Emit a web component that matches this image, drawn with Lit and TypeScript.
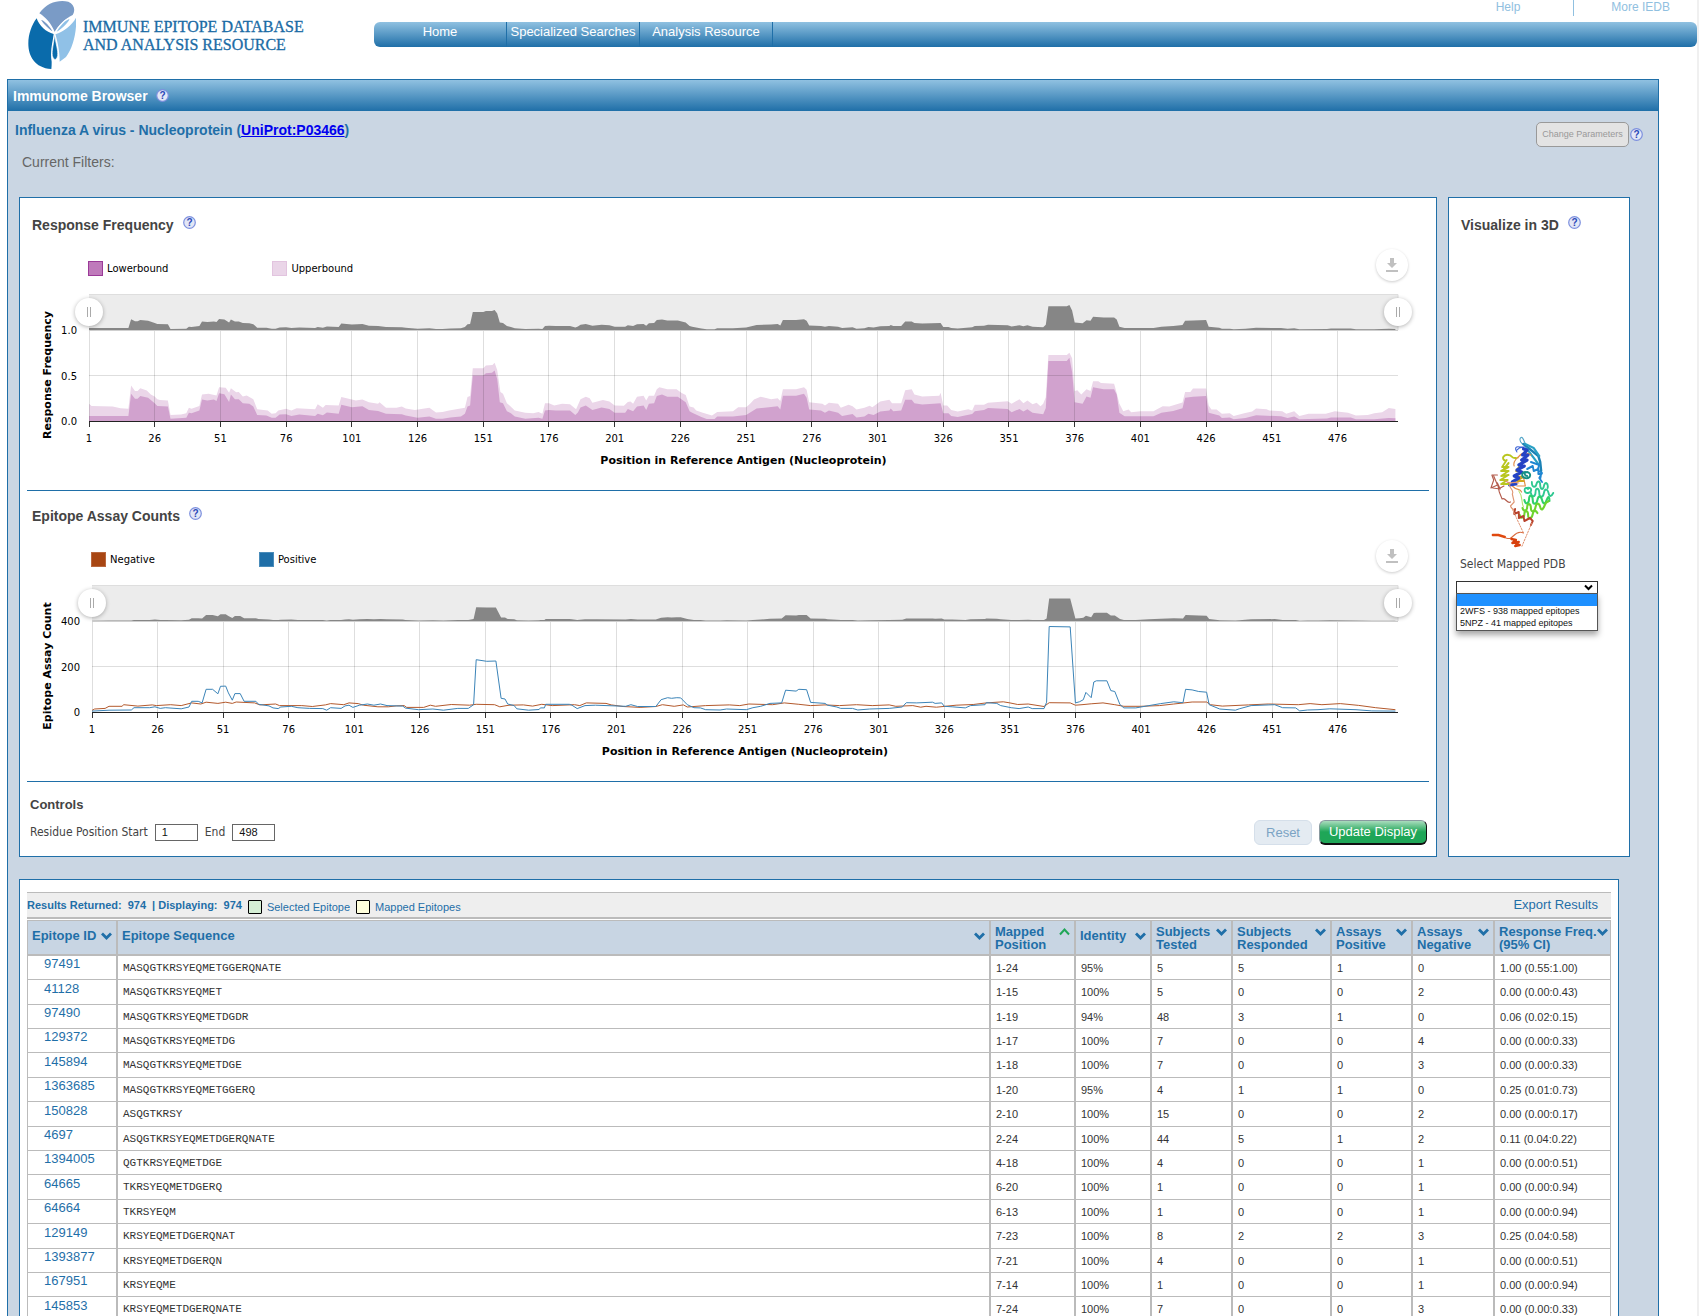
import { LitElement, html, svg, css } from "lit";
import { customElement, property, state } from "lit/decorators.js";

type Pt = [number, number];

const parse = (s: string): Pt[] =>
  s.trim().split(/\s+/).map((p) => p.split(",").map(Number) as Pt);

const LOWER = parse(`1,.055 16,.055 17,.3 18.5,.245 19.5,.245 20.5,.275 23.5,.255 26,.195 27,.165 31,.16 32,.025 38,.035 39,.09 40,.085 43,.115 44,.235
46,.225 48.5,.235 49.5,.22 50.5,.305 52.5,.295 54.3,.21 55,.29 56.5,.24 58,.24 59.5,.195 62,.19 63.5,.16 65,.065 68.5,.06 70.5,.035 72,.035 73.5,.07 76,.075
78,.055 81,.07 87,.055 88,.08 90,.063 91.5,.095 96,.08 97,.178 101,.15 105,.163 107.5,.12 111,.11 114,.08 120,.075 121.5,.06 126,.035 130.5,.05 133,.025
135.5,.025 138.5,.04 142.5,.05 144,.08 145,.16 146,.17 147,.5 151,.5 152,.525 154.3,.53 155.3,.555 156.3,.46 157.3,.207 158.5,.195 160,.107 161.5,.085
163,.05 167,.025 172,.035 173.5,.025 174.5,.115 176,.12 178.5,.115 184,.115 186,.067 187,.095 188,.148 190,.17 192.5,.12 196,.148 199,.133 201,.09 205,.09
206,.133 208,.107 209.5,.16 212,.17 213,.12 214,.19 216,.196 217,.274 219,.29 221,.267 225,.267 228,.207 229.5,.107 230.5,.09 234,.044 236,.022 239,.022
240,.05 246,.05 251,.067 255,.137 260.5,.155 263,.163 264,.126 265,.278 270,.278 273,.3 274,.255 275,.126 279.5,.115 281,.09 282.5,.115 286,.09 287.5,.055
291.5,.078 293,.037 296,.05 297.5,.08 299.5,.067 302,.104 305.5,.115 306,.137 307,.107 310,.115 311.5,.233 314,.233 315,.196 318,.18 325,.196 326,.085
328,.085 329,.055 331.5,.044 337,.078 338,.107 341.5,.12 343,.144 350.5,.133 352,.096 355,.133 356.5,.104 358,.13 360,.09 364,.074 365,.144 366,.66 373,.66
374,.695 375,.54 376,.207 379,.19 380.5,.27 382,.255 383,.37 387,.348 391,.348 392,.29 393,.09 395,.052 406,.052 409,.09 413.5,.11 417,.14 418,.255
421,.267 426,.274 427,.09 431,.06 432,.033 435,.037 436.5,.02 441,.033 445,.063 454.5,.052 457,.033 459.5,.05 461.5,.02 472,.026 473.5,.04 481,.04
483,.02 490,.02 495.5,.033 498,.03`);

const UPPER = parse(`1,.19 2,.165 10,.16 13,.14 16,.135 17,.39 18.5,.33 19.5,.33 20.5,.36 23,.335 24.5,.29 26,.27 27,.24 28,.23 31,.225 32,.065 36,.07 38,.085
39,.145 40,.135 43,.165 44,.29 46.5,.3 49.5,.28 50.5,.37 53,.365 54.3,.31 55,.36 57,.315 58,.32 59.5,.27 61,.28 63.5,.24 65,.13 69,.115 70.5,.08 72,.085
73,.115 76,.135 78,.115 80,.14 87,.13 88,.185 90,.145 91,.175 96,.17 97,.265 101,.235 102.5,.225 105,.237 107.5,.205 111,.19 111.5,.205 114,.145 118,.145
120,.16 121.5,.137 125,.12 130.5,.145 133,.095 135.5,.1 138,.115 144,.145 145,.265 146,.275 147,.58 151,.58 152,.61 154.5,.615 155.3,.64 156.3,.56
157.5,.32 158.5,.3 160,.195 161,.17 163,.115 167,.09 170,.085 172,.1 173.5,.08 174.5,.195 176,.195 178,.17 181,.19 184,.185 186.3,.13 188,.24 190,.267
191.5,.25 192.5,.2 196.5,.23 199,.215 201,.17 204.5,.167 206,.21 207,.215 208,.19 209.5,.267 212,.278 213,.226 214,.278 216,.278 217,.35 218,.37 221,.348
224.5,.348 226.5,.307 228,.285 229.5,.16 231,.148 232,.115 234.5,.09 238,.06 240,.1 246,.107 248,.15 251,.15 252.5,.19 254,.237 256.5,.267 260.5,.24
263,.25 264,.22 265,.348 270,.348 273,.37 274,.344 275,.207 280,.19 281,.17 282.5,.2 286,.19 287,.145 290,.178 291.5,.163 293,.126 296,.145 298,.167
299,.15 302,.215 305.5,.233 306.5,.196 310,.196 311.5,.337 314,.348 315,.29 318,.27 324.5,.278 325,.31 326,.17 327.5,.17 329,.12 331.5,.104 335.5,.13
337,.115 338,.178 341.5,.178 343,.2 350.5,.218 352,.19 355,.24 356.5,.196 358,.226 360,.185 361.5,.2 363,.163 364,.19 365,.26 366,.725 373,.725 374,.75
375,.69 376,.33 377,.337 378.5,.29 380.5,.348 382,.33 383,.437 385,.437 386,.418 391,.41 392,.307 393,.19 394.5,.107 396.5,.126 397.5,.096 401,.107
406,.107 407.5,.133 409.5,.163 412,.16 417,.204 418,.318 420,.318 421,.356 426,.356 427,.17 428,.126 430,.126 432,.08 435,.085 436.5,.055 440.5,.085
443.5,.104 445,.137 449,.13 450,.115 455,.107 456.5,.08 459.5,.107 461.5,.055 465,.08 471.5,.08 475,.107 480,.09 483,.06 487.5,.067 490,.085 493,.096
495.5,.144 498,.133`);

const POSITIVE = parse(`1,4 7.5,8 16,9 17,19 23,19 25,23 27,16 29,19 35,14 38,22 39,47 41.5,47 43,40 44.5,100 47,100 49,80 50,113 52,114 53,84 54.5,52 55.5,81
57.5,81 59,47 63.5,47 64.5,34 68.5,27 70,18 72,15 73,22 77,25 79.5,19 84,16 89,15 90.5,8 92,19 96,16 97.5,27 99,30 100.5,20 103,30 106,35 108.5,30 111,35
113.5,28 119.5,26 120.5,17 125.5,10 131,13 135,8 140.5,16 144.5,16 146.5,32 147.5,230 151.5,223 155,224 157,60 158.5,57 159.5,35 162,28 163,14 167.5,8
171.5,11 172,18 173.5,18 174,34 183,34 184,30 186,15 189,28 193,30 204.5,25 206.5,32 209,24 216,24 218,54 220.5,63 222,60 224,63 225.5,62 228,32
230.5,19 233,18 235,10 240.5,9 243,13 250.5,10 253,19 256,25 259.5,38 264,40 265.5,96 269.5,92 270.5,100 273.5,98 275,42 280.5,38 281.5,30 285,22
286.5,16 291,16 293,9 297.5,13 305,16 310,22 311.5,41 315.5,40 321.5,43 322.5,38 325,40 326,25 329,23 334,18 336,28 341.5,32 342,41 346,38 347.5,28
351.5,19 354.5,15 358,22 359.5,15 364,15 365,43 366,376 374,374 376,40 377.5,45 379,54 380,86 382,63 383,132 384,137 388,137 389.5,94 391,90 393,32
394.5,18 399,18 404,28 408.5,37 413.5,45 417,41 418,100 420.5,97 423,90 426,87 427,32 431,13 437,8 438.5,14 443,28 452,32 455,19 460,18 461.5,5 464.5,9
468.5,10 473,14 483,10 489,5 498,4`);

const NEGATIVE = parse(`1,7 2,13 6,16 7.5,25 12.5,25 13,32 18.5,26 24,31 25.5,28 31,32 35,28 39,40 42.5,35 44.5,43 49,38 52,43 54.5,38 56,44 63,40 65,31 71,35
72.5,28 81,28 85,24 90,31 92,37 97,32 99,40 102.5,37 104.5,30 110,23 114,23 117,27 120,28 121,20 127.5,20 130,30 132,25 138,33 145,30 147.5,34 154.5,32
156.5,23 160,30 165.5,31 169,26 172.5,34 176.5,28 185,32 187,28 189.5,40 197,38 199,31 203.5,24 210,20 216,24 218.5,32 223,25 226.5,31 228,22 235,28
244,31 248,28 251.5,35 260.5,32 265,40 270.5,34 275,28 280.5,31 286,28 292.5,32 298.5,28 305,31 307.5,25 314,28 317,21 319,25 323,21 330.5,30 337,33
342,40 348.5,45 351,40 354,33 358,35 364,24 366,41 374,40 376,30 378.5,32 382,36 386.5,40 391,32 394.5,25 401,25 408,28 413.5,35 420.5,44 426,44
427.5,32 432,26 442,31 449.5,35 461,32 465.5,37 470,32 477,37 484,29 490.5,19 498,10`);

interface Series {
  name: string;
  fill: string;
  border: string;
  stroke: string;
  area: string;
  points: Pt[];
}
interface ChartSpec {
  title: string;
  axis: string;
  left: number;
  max: number;
  ticks: string[];
  preview: Pt[];
  previewScale: number;
  series: Series[];
}

const FREQUENCY: ChartSpec = {
  title: "Response Frequency",
  axis: "Response Frequency",
  left: 62,
  max: 1,
  ticks: ["0.0", "0.5", "1.0"],
  preview: LOWER,
  previewScale: 36,
  series: [
    { name: "Lowerbound", fill: "#bf7abb", border: "#9b3a98", stroke: "none", area: "#d1a2ce", points: LOWER },
    { name: "Upperbound", fill: "#ead5e8", border: "#e2c4df", stroke: "none", area: "#ebd6e9", points: UPPER },
  ],
};

const COUNTS: ChartSpec = {
  title: "Epitope Assay Counts",
  axis: "Epitope Assay Count",
  left: 65,
  max: 400,
  ticks: ["0", "200", "400"],
  preview: POSITIVE,
  previewScale: 0.06,
  series: [
    { name: "Negative", fill: "#a84613", border: "#b9683f", stroke: "#b3592c", area: "none", points: NEGATIVE },
    { name: "Positive", fill: "#1f6fa8", border: "#4a8cba", stroke: "#3b84b8", area: "none", points: POSITIVE },
  ],
};

const helpIcon = html`<svg width="13" height="13" viewBox="0 0 13 13" aria-hidden="true">
  <circle cx="6.5" cy="6.5" r="5.8" fill="#e3e7f6" stroke="#7d90de" stroke-width="1.2" />
  <text x="6.5" y="10" text-anchor="middle" font-family="Liberation Sans, sans-serif" font-size="10" font-weight="700" fill="#2a48b8">?</text>
</svg>`;

const TOP = 46;
const BASE = 137;
const HEIGHT = 206;

@customElement("range-chart")
class RangeChart extends LitElement {
  @property({ attribute: false }) spec!: ChartSpec;
  @state() private w = 1403;
  private ro = new ResizeObserver(() => this.measure());

  static styles = css`
    :host { display: block; position: relative; font: 10px/15px "DejaVu Sans", Verdana, sans-serif; color: #000; }
    .legend { display: flex; gap: 104px; padding-top: 27px; }
    .key { display: flex; gap: 4px; }
    .swatch { width: 15px; height: 15px; box-sizing: border-box; border: 1px solid; }
    .plot { display: block; margin-top: 8px; overflow: visible; }
    .bold { font-weight: 700; font-size: 11px; }
    .download, .grip {
      position: absolute; display: grid; place-items: center; padding: 0; border: 0;
      border-radius: 50%; background: #fff; box-shadow: 0 1px 4px rgba(0, 0, 0, 0.3);
    }
    .download { width: 32px; height: 32px; right: 21px; top: 15px; box-shadow: 0 1px 3px rgba(0, 0, 0, 0.2); }
    .grip { width: 28px; height: 28px; top: 64px; }
    .grip.end { right: 17px; }
  `;

  private measure() {
    const w = Math.round(this.getBoundingClientRect().width);
    if (w > 0 && w !== this.w) this.w = w;
  }
  firstUpdated() {
    this.measure();
    this.ro.observe(this);
  }
  disconnectedCallback() {
    super.disconnectedCallback();
    this.ro.disconnect();
  }

  render() {
    const { left, max, ticks, series, preview, previewScale, axis } = this.spec;
    const right = this.w - 31;
    const x = (p: number) => left + ((p - 1) / 498) * (right - left);
    const y = (v: number) => BASE - (v / max) * (BASE - TOP);
    const line = (pts: Pt[], f: (v: number) => number) =>
      pts.map(([p, v]) => `${x(p).toFixed(1)},${f(v).toFixed(1)}`).join(" ");
    const marks = Array.from({ length: 20 }, (_, i) => 1 + i * 25);
    const middle = (left + right) / 2;
    return html`
      <div class="legend" style="padding-left:${left - 1}px">
        ${series.map((s) => html`<span class="key"><i class="swatch" style="background:${s.fill};border-color:${s.border}"></i>${s.name}</span>`)}
      </div>
      <svg class="plot" width=${this.w} height=${HEIGHT} role="img" aria-label=${axis}>
        <rect x=${left} y="10" width=${right - left} height="36" fill="#ececec" />
        <path d="M${left} 10.5H${right}V46" fill="none" stroke="#dedede" />
        <polygon fill="#868686" points="${x(1)},46 ${line(preview, (v) => 46 - v * previewScale)} ${x(498)},46" />
        <path d="M${left} 46.5H${right}" stroke="#cfcfcf" />
        ${[...series].reverse().filter((s) => s.area !== "none").map((s) => svg`<polygon fill=${s.area} points="${x(1)},${BASE} ${line(s.points, y)} ${x(498)},${BASE}" />`)}
        <path d="M${left} 91.5H${right}" stroke="#000" stroke-opacity="0.13" />
        ${marks.map((m) => svg`
          <path d="M${Math.floor(x(m)) + 0.5} 47V${BASE}" stroke="#000" stroke-opacity="0.13" />
          <path d="M${Math.floor(x(m)) + 0.5} ${BASE}v6" stroke="#333" />
          <text x=${x(m)} y="158" text-anchor="middle">${m}</text>`)}
        ${series.filter((s) => s.stroke !== "none").map((s) => svg`<polyline fill="none" stroke=${s.stroke} stroke-linejoin="round" points=${line(s.points, y)} />`)}
        <path d="M${left} ${BASE + 0.5}H${right}" stroke="#222" />
        ${ticks.map((t, i) => svg`<text x=${left - 12} y=${BASE + 4 - (i * (BASE - TOP)) / 2} text-anchor="end">${t}</text>`)}
        <text class="bold" x=${middle} y="180" text-anchor="middle">Position in Reference Antigen (Nucleoprotein)</text>
        <text class="bold" transform="translate(24 91) rotate(-90)" text-anchor="middle">${axis}</text>
      </svg>
      <button class="download" aria-label="Download chart">
        <svg width="12" height="14" viewBox="0 0 12 14"><path d="M4 0h4v5h3L6 10 1 5h3zM0 12h12v2H0z" fill="#c0c0c0" /></svg>
      </button>
      <button class="grip" aria-label="Range start" style="left:${left - 14}px">
        <svg width="4" height="10"><path d="M.5 0v10M3.5 0v10" stroke="#aaa" /></svg>
      </button>
      <button class="grip end" aria-label="Range end">
        <svg width="4" height="10"><path d="M.5 0v10M3.5 0v10" stroke="#aaa" /></svg>
      </button>
    `;
  }
}

interface Column { label: string[]; width: number | null; sort: "down" | "up" }
const COLUMNS: Column[] = [
  { label: ["Epitope ID"], width: 90, sort: "down" },
  { label: ["Epitope Sequence"], width: null, sort: "down" },
  { label: ["Mapped", "Position"], width: 85, sort: "up" },
  { label: ["Identity"], width: 76, sort: "down" },
  { label: ["Subjects", "Tested"], width: 81, sort: "down" },
  { label: ["Subjects", "Responded"], width: 99, sort: "down" },
  { label: ["Assays", "Positive"], width: 81, sort: "down" },
  { label: ["Assays", "Negative"], width: 82, sort: "down" },
  { label: ["Response Freq.", "(95% CI)"], width: 116, sort: "down" },
];

const ROWS = `97491|MASQGTKRSYEQMETGGERQNATE|1-24|95%|5|5|1|0|1.00 (0.55:1.00)
41128|MASQGTKRSYEQMET|1-15|100%|5|0|0|2|0.00 (0.00:0.43)
97490|MASQGTKRSYEQMETDGDR|1-19|94%|48|3|1|0|0.06 (0.02:0.15)
129372|MASQGTKRSYEQMETDG|1-17|100%|7|0|0|4|0.00 (0.00:0.33)
145894|MASQGTKRSYEQMETDGE|1-18|100%|7|0|0|3|0.00 (0.00:0.33)
1363685|MASQGTKRSYEQMETGGERQ|1-20|95%|4|1|1|0|0.25 (0.01:0.73)
150828|ASQGTKRSY|2-10|100%|15|0|0|2|0.00 (0.00:0.17)
4697|ASQGTKRSYEQMETDGERQNATE|2-24|100%|44|5|1|2|0.11 (0.04:0.22)
1394005|QGTKRSYEQMETDGE|4-18|100%|4|0|0|1|0.00 (0.00:0.51)
64665|TKRSYEQMETDGERQ|6-20|100%|1|0|0|1|0.00 (0.00:0.94)
64664|TKRSYEQM|6-13|100%|1|0|0|1|0.00 (0.00:0.94)
129149|KRSYEQMETDGERQNAT|7-23|100%|8|2|2|3|0.25 (0.04:0.58)
1393877|KRSYEQMETDGERQN|7-21|100%|4|0|0|1|0.00 (0.00:0.51)
167951|KRSYEQME|7-14|100%|1|0|0|1|0.00 (0.00:0.94)
145853|KRSYEQMETDGERQNATE|7-24|100%|7|0|0|3|0.00 (0.00:0.33)`
  .split("\n").map((r) => r.split("|"));

@customElement("results-table")
class ResultsTable extends LitElement {
  static styles = css`
    :host { display: block; font: 11px/14px "Liberation Sans", Arial, sans-serif; color: #333; }
    .bar {
      display: flex; align-items: center; justify-content: space-between; box-sizing: border-box; height: 27px;
      background: #eee; border-top: 1px solid #bbb; border-bottom: 2px solid #bbb; color: #1f6fa8; padding-right: 13px;
    }
    .info { display: flex; align-items: center; gap: 6px; }
    .key { display: flex; align-items: center; gap: 5px; padding-top: 3px; }
    .swatch { width: 14px; height: 14px; box-sizing: border-box; border: 1px solid #000; border-radius: 1px; }
    .selected { background: #d5efd5; }
    .mapped { background: #ffffdc; }
    a { color: #1f6fa8; text-decoration: none; }
    .export { font-size: 13px; }
    table { width: 100%; margin-top: 1px; table-layout: fixed; border-collapse: separate; border-spacing: 0; border-left: 1px solid #bbb; }
    th { background: #c8d5e3; height: 33px; padding: 0; border-top: 1px solid #bbb; border-bottom: 2px solid #bbb; border-right: 2px solid #bbb; vertical-align: top; text-align: left; }
    th:last-child, td:last-child { border-right-width: 1px; }
    .sort {
      display: flex; justify-content: space-between; width: 100%; border: 0; background: none; padding: 4px 4px 0;
      font: 700 13px/13px "Liberation Sans", Arial, sans-serif; color: #1f6fa8; text-align: left; white-space: nowrap;
    }
    .sort.single { padding-top: 8px; }
    .sort svg { flex: none; margin-top: 3px; }
    .label { display: flex; flex-direction: column; }
    td { box-sizing: border-box; height: 24px; padding: 0 5px; border-bottom: 1px solid #bbb; border-right: 2px solid #bbb; }
    tr:nth-child(5n + 2) td, tr:nth-child(5n) td { height: 25px; }
    .id { font-size: 13px; padding: 0 0 7px 16px; }
    .seq { font: 11px/14px "Liberation Mono", "Courier New", monospace; }
  `;

  render() {
    return html`
      <div class="bar">
        <div class="info">
          <b>Results Returned:</b><b>974</b><b>| Displaying:</b><b>974</b>
          <span class="key"><i class="swatch selected"></i>Selected Epitope</span>
          <span class="key"><i class="swatch mapped"></i>Mapped Epitopes</span>
        </div>
        <a class="export" href="#export">Export Results</a>
      </div>
      <table>
        <colgroup>${COLUMNS.map((c) => (c.width ? html`<col style="width:${c.width}px">` : html`<col>`))}</colgroup>
        <thead><tr>${COLUMNS.map((c) => html`<th scope="col">
          <button class="sort ${c.label.length === 1 ? "single" : ""}">
            <span class="label">${c.label.map((l) => html`<span>${l}</span>`)}</span>
            <svg width="11" height="8" viewBox="0 0 11 8" fill="none" stroke-width="2.8">
              ${c.sort === "down" ? svg`<path d="M1 1.5L5.5 6L10 1.5" stroke="#1f6fa8" />` : svg`<path d="M1 6.5L5.5 1.5L10 6.5" stroke="#1fa657" stroke-width="2" />`}
            </svg>
          </button></th>`)}</tr></thead>
        <tbody>${ROWS.map((r) => html`<tr>${r.map((v, i) =>
          i === 0 ? html`<td class="id"><a href="#epitope-${v}">${v}</a></td>` : html`<td class=${i === 1 ? "seq" : ""}>${v}</td>`)}</tr>`)}</tbody>
      </table>
    `;
  }
}

const protein = html`<svg class="protein" width="66" height="112" viewBox="0 0 71 112" preserveAspectRatio="none" fill="none" stroke-linecap="round" stroke-linejoin="round" role="img" aria-label="Protein structure">
  <path d="M35 8c-5-4-2-8 0-6 2 2 2 5 4 8" stroke="#55a6c8" stroke-width="1.2" />
  <path d="M36 8l16 12 2 6 1 9" stroke="#1c82b5" stroke-width="2.6" />
  <path d="M39 12l13 16M38 8l9 4 6 8" stroke="#29a0c4" stroke-width="2.2" />
  <path d="M29 14c4-4 8-3 8 0M29 16c-3-4-1-6 3-5h6" stroke="#3d63d6" stroke-width="1.1" />
  <path d="M30 22c3-6 10-6 14-3M24 50c5 5 8 2 10 6M29 50l9 0-2-9M26 30c-2-5 4-9 7-11" stroke="#e28b46" stroke-width="1.2" />
  <path d="M31 31l-3 4 7 1-7 4 8 1-7 4 7 0" stroke="#d3a51c" stroke-width="1.8" />
  <path d="M36 13l4 1-5 5 6 0-7 5 6 0-9 5 6 1-8 4 5 2-8 4 5 2-7 4 4 2-7 1" stroke="#2443c4" stroke-width="3.2" />
  <path d="M40 33l6-3 1 5 5-2 0 5 3 0-1 5M44 26l9 3-2 5 5 3-3 5 3 4" stroke="#1f86d2" stroke-width="2" />
  <path d="M17 25c-6-2-2-7 3-6 4 0 3 4 8 3M15 33l5-6M18 24l-5 7 7 0-8 4 8 0-8 5 8-1-9 5 8 0-7 4 8 0" stroke="#b9c61e" stroke-width="2" />
  <path d="M38 36c-4 0-5 5 0 6 6 1 7-5 2-6-4 0-3 4 0 4" stroke="#168f85" stroke-width="2" />
  <path d="M41 53c-5-4-5 5 0 4s4-6-1-5M45 46c0 6 4 6 5 2s4-3 4 1 3 6 4 1 5-3 4 2M44 57c1 5 5 4 5-1s4-4 4 1 4 5 5 0 4-4 5 0 3 4 5 0" stroke="#2fc891" stroke-width="2" />
  <path d="M37 64c1 5 5 4 5-1s4-4 4 1 4 5 5 0 4-4 5 0 3 5 5 0 3-3 3 1" stroke="#2fd06a" stroke-width="2.2" />
  <path d="M35 72c1 4 5 3 5-1s4-4 4 1 4 4 5-1 4-4 5 0 3 3 5-2 3-2 4-4M32 79c1 4 5 3 5-1s4-4 4 1 4 4 5-1 4-3 5-1" stroke="#6ed42e" stroke-width="2.2" />
  <path d="M31 55c5 6 2 10 5 16" stroke="#b6df6a" stroke-width="1.1" />
  <path d="M8 39l-6 0 2 5-3 8 7-3-4-9M3 52l8 1-3-6 2 9 3 7c4-2 5 5 9 3M9 53l6-3" stroke="#b35b4b" stroke-width="1.2" />
  <path d="M22 47c-4 5 5 6 2 11l2 8-4 4c1 5 5 1 4 6M17 45c4 4 8 0 14 2" stroke="#df9673" stroke-width="1.2" />
  <path d="M27 73l-1 5 5-2 0 6 5-2 1 5 6-3 3 3-2 4" stroke="#b8422b" stroke-width="2" />
  <path d="M23 71L36 97M45 87L34 111" stroke="#dd8a67" stroke-width="1" stroke-dasharray="1.5 1.5" />
  <path d="M36 97c-5-2-8 0-11 3s-4 3-8 2" stroke="#d96b3e" stroke-width="1.1" />
  <path d="M3 99h6l7 2" stroke="#e0490f" stroke-width="2.4" />
  <path d="M23 103l5 1-4 3 7-1-4 4 5-1" stroke="#d8400c" stroke-width="2.4" />
</svg>`;

@customElement("app-root")
class AppRoot extends LitElement {
  static styles = css`
    :host {
      display: block; box-sizing: border-box; height: 100vh; overflow-y: auto; scrollbar-width: none;
      background: #fff; border-right: 2px solid #f0f0f0; color: #444; font: 13px/18px "Liberation Sans", Arial, sans-serif;
    }
    header { display: flex; height: 79px; }
    .brand { display: flex; gap: 7px; flex: none; width: 347px; padding-left: 27px; color: #1a6ba5; text-decoration: none; font: 16px/18px "Liberation Serif", "Times New Roman", serif; }
    .brand svg { margin-top: 1px; flex: none; }
    .name { display: flex; flex-direction: column; padding-top: 18px; white-space: nowrap; -webkit-text-stroke: 0.3px #1a6ba5; }
    .top { flex: 1; min-width: 0; }
    .links { display: flex; justify-content: flex-end; height: 22px; font-size: 12px; line-height: 15px; }
    .links a { color: #90c0e0; text-decoration: none; }
    .links a:first-child { padding-right: 53px; height: 16px; border-right: 1px solid #90c0e0; }
    .links a:last-child { padding: 0 27px 0 37px; }
    nav { display: flex; height: 25px; border-radius: 6px; background: linear-gradient(#90c1e1, #1f6fa8); line-height: 20px; }
    nav a { box-sizing: border-box; width: 133px; border-right: 1px solid #1f6fa8; color: #fff; text-align: center; text-decoration: none; }
    .main { margin: 0 38px 0 7px; border: 1px solid #1f6fa8; background: #cad6e3; }
    .title { display: flex; align-items: center; gap: 8px; height: 31px; margin: 0; padding-left: 5px; background: linear-gradient(#90c1e1, #1f6fa8); color: #fff; font-size: 14px; }
    .intro { display: flex; justify-content: space-between; padding: 10px 15px 26px 7px; }
    h2 { margin: 0; font-size: 14px; line-height: 18px; color: #1f6fa8; }
    h2 a { color: #00e; }
    .filters { margin: 14px 0 0 7px; font-size: 14px; color: #666; }
    .change { display: flex; align-items: center; gap: 1px; height: 26px; }
    .change button { width: 93px; height: 25px; padding: 0; border: 1px solid #999; border-radius: 5px; background: #e3e3e3; color: #999; font: 9px "Liberation Sans", Arial, sans-serif; }
    .panels { display: flex; gap: 11px; padding: 0 28px 0 11px; }
    .card { box-sizing: border-box; border: 1px solid #1f6fa8; background: #fff; }
    .charts { flex: 1; min-width: 0; padding: 2px 7px 0; }
    .section { border-bottom: 1px solid #1f6fa8; }
    h3 { display: flex; gap: 9px; margin: 0; padding: 16px 0 0 5px; font-size: 14px; line-height: 18px; color: #444; }
    .controls { padding: 14px 2px 11px 3px; }
    .controls h4 { margin: 0 0 5px; font-size: 13px; line-height: 18px; }
    .row { display: flex; align-items: center; height: 26px; font: 12px/18px "DejaVu Sans Condensed", "DejaVu Sans", Tahoma, sans-serif; }
    .row input { box-sizing: border-box; width: 43px; height: 17px; margin: 0 7px; padding: 0 6px; border: 1px solid #666; color: #111; font: 11px "Liberation Sans", Arial, sans-serif; }
    .actions { display: flex; align-items: center; gap: 7px; margin-left: auto; }
    .actions button { height: 25px; padding: 0; border-radius: 6px; font: 13px "Liberation Sans", Arial, sans-serif; }
    .reset { width: 58px; border: 1px solid #d5dfea; background: #e4ebf2; color: #7ba3c4; }
    .update { width: 108px; border: 1px solid #8a9aa0; border-right-color: #111; border-bottom: 2px solid #111; background: linear-gradient(#a9dcbd, #1fa657 50%); color: #fff; }
    .viewer { flex: none; width: 182px; padding: 2px 7px 0; }
    .viewer .protein { display: block; margin: 202px 0 0 34px; }
    .viewer label { display: block; margin: 7px 0 8px 4px; font: 12px/18px "DejaVu Sans Condensed", "DejaVu Sans", Tahoma, sans-serif; }
    .picker { position: relative; width: 142px; }
    .picker select { display: block; box-sizing: border-box; appearance: none; width: 100%; height: 13px; padding: 0; border: 1px solid #333; border-radius: 0; background: #fff; font-size: 9px; }
    .picker svg { position: absolute; right: 5px; top: 3px; pointer-events: none; }
    .menu { position: absolute; top: 12px; left: 0; right: 0; margin: 0; padding: 0; list-style: none; border: 1px solid #555; background: #fff; color: #111; box-shadow: 0 4px 6px rgba(0, 0, 0, 0.35); font: 9px/11px "Liberation Sans", Arial, sans-serif; white-space: nowrap; }
    .menu li { height: 12px; padding-left: 3px; }
    .menu .active { background: #1e90ff; }
    .results { margin: 22px 39px 0 11px; padding: 12px 7px 0; }
  `;

  render() {
    return html`
      <header>
        <a class="brand" href="#home">
          <svg width="49" height="68" viewBox="0 0 147 204">
            <path d="M29 52C-8 100-12 198 73 204C74 196 74 190 74 182C68 150 78 120 80 99C58 94 36 74 29 52Z" fill="#0a6bab" />
            <path d="M37 37C60 4 94-4 124 2C142 9 146 28 137 42C114 54 95 72 83 93C74 70 56 48 37 37Z" fill="#7a9bc6" />
            <path d="M147 50C150 92 138 140 117 168L98 182C98 152 92 122 85 100C110 92 134 74 147 50Z" fill="#90c1e7" />
            <path d="M83 100C80 128 74 148 76 164C80 178 88 180 92 164C94 148 86 128 83 100Z" fill="#0a6bab" stroke="#fff" stroke-width="2" />
            <path d="M82 96C70 92 42 66 40 54C52 54 72 76 82 96Z" fill="#7a9bc6" stroke="#fff" stroke-width="4" />
            <path d="M84 96C98 92 130 64 130 52C116 52 94 76 84 96Z" fill="#90c1e7" stroke="#fff" stroke-width="4" />
          </svg>
          <span class="name"><span>IMMUNE EPITOPE DATABASE</span><span>AND ANALYSIS RESOURCE</span></span>
        </a>
        <div class="top">
          <div class="links"><a href="#help">Help</a><a href="#more">More IEDB</a></div>
          <nav><a href="#home">Home</a><a href="#searches">Specialized Searches</a><a href="#analysis">Analysis Resource</a></nav>
        </div>
      </header>
      <main class="main">
        <h1 class="title">Immunome Browser ${helpIcon}</h1>
        <div class="intro">
          <div>
            <h2>Influenza A virus - Nucleoprotein (<a href="#P03466">UniProt:P03466</a>)</h2>
            <div class="filters">Current Filters:</div>
          </div>
          <div class="change"><button disabled>Change Parameters</button>${helpIcon}</div>
        </div>
        <div class="panels">
          <div class="card charts">
            ${[FREQUENCY, COUNTS].map((s) => html`<section class="section"><h3>${s.title} ${helpIcon}</h3><range-chart .spec=${s}></range-chart></section>`)}
            <form class="controls" @submit=${(e: Event) => e.preventDefault()}>
              <h4>Controls</h4>
              <div class="row">
                <label for="start">Residue Position Start</label><input id="start" value="1">
                <label for="end">End</label><input id="end" value="498">
                <div class="actions"><button type="reset" class="reset">Reset</button><button class="update">Update Display</button></div>
              </div>
            </form>
          </div>
          <div class="card viewer">
            <h3>Visualize in 3D ${helpIcon}</h3>
            ${protein}
            <label for="pdb">Select Mapped PDB</label>
            <div class="picker">
              <select id="pdb">
                <option></option>
                <option>2WFS - 938 mapped epitopes</option>
                <option>5NPZ - 41 mapped epitopes</option>
              </select>
              <svg width="9" height="7" viewBox="0 0 9 7"><path d="M1 1.5l3.5 3.5L8 1.5" fill="none" stroke="#000" stroke-width="2" /></svg>
              <ul class="menu" role="listbox">
                <li class="active" role="option"></li>
                <li role="option">2WFS - 938 mapped epitopes</li>
                <li role="option">5NPZ - 41 mapped epitopes</li>
              </ul>
            </div>
          </div>
        </div>
        <div class="card results"><results-table></results-table></div>
      </main>
    `;
  }
}
